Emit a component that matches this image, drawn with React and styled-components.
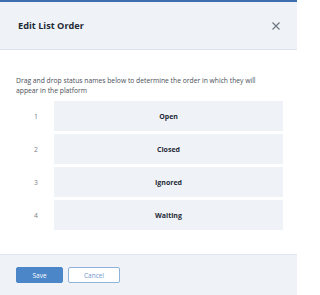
import styled, { createGlobalStyle } from "styled-components";

const GlobalStyle = createGlobalStyle`
  html, body {
    margin: 0;
    padding: 0;
    background: #ffffff;
    overflow: hidden;
  }
  body {
    font-family: "Open Sans", "Noto Sans", sans-serif;
  }
`;

const statuses = ["Open", "Closed", "Ignored", "Waiting"];

const Modal = styled.div`
  width: 297px;
  height: 295px;
  display: flex;
  flex-direction: column;
  background: #ffffff;
  border-top: 2px solid #3d6fae;
  box-sizing: border-box;
`;

const Header = styled.div`
  height: 47px;
  flex-shrink: 0;
  display: flex;
  align-items: center;
  justify-content: space-between;
  padding: 0 15px 0 18px;
  background: #eff3f8;
  border-bottom: 1px solid #dde3ee;
`;

const Title = styled.h2`
  margin: 0;
  font-size: 9.2px;
  font-weight: 700;
  color: #1f2a37;
`;

const CloseButton = styled.button`
  border: none;
  background: none;
  padding: 0;
  width: 12px;
  height: 12px;
  display: flex;
  align-items: center;
  justify-content: center;
  color: #6f7680;
  cursor: pointer;
`;

const Body = styled.div`
  flex: 1;
  padding: 26px 14px 0 16px;
  display: flex;
  flex-direction: column;
`;

const Description = styled.p`
  margin: 0 0 5px 0;
  max-width: 248px;
  font-size: 6.75px;
  line-height: 10px;
  color: #4a4f57;
`;

const List = styled.div`
  display: flex;
  flex-direction: column;
  gap: 3px;
`;

const Row = styled.div`
  display: flex;
  align-items: center;
`;

const Index = styled.span`
  width: 38px;
  font-size: 6.8px;
  color: #7b818a;
  padding-left: 18px;
  box-sizing: border-box;
`;

const Item = styled.div`
  flex: 1;
  height: 30px;
  display: flex;
  align-items: center;
  justify-content: center;
  background: #eff3f8;
  font-size: 7px;
  font-weight: 700;
  color: #1f2a37;
  cursor: grab;
`;

const Footer = styled.div`
  height: 40px;
  flex-shrink: 0;
  display: flex;
  align-items: center;
  gap: 5px;
  padding: 0 16px;
  background: #eff3f8;
  border-top: 1px solid #e1e6ee;
`;

const Button = styled.button`
  height: 16px;
  width: ${(p) => (p.$primary ? "47px" : "52px")};
  font-family: inherit;
  font-size: 6.5px;
  border-radius: 2px;
  border: 1px solid ${(p) => (p.$primary ? "#4a86c8" : "#8fb2dc")};
  background: ${(p) => (p.$primary ? "#4a86c8" : "#ffffff")};
  color: ${(p) => (p.$primary ? "#ffffff" : "#6f98cc")};
  padding: 0;
  cursor: pointer;
`;

export default function App() {
  return (
    <>
      <GlobalStyle />
      <Modal>
        <Header>
          <Title>Edit List Order</Title>
          <CloseButton aria-label="Close">
            <svg width="8" height="8" viewBox="0 0 8 8">
              <path d="M0.5 0.5 L7.5 7.5 M7.5 0.5 L0.5 7.5" stroke="currentColor" strokeWidth="1.2" />
            </svg>
          </CloseButton>
        </Header>
        <Body>
          <Description>
            Drag and drop status names below to determine the order in which they will appear in the platform
          </Description>
          <List>
            {statuses.map((s, i) => (
              <Row key={s}>
                <Index>{i + 1}</Index>
                <Item>{s}</Item>
              </Row>
            ))}
          </List>
        </Body>
        <Footer>
          <Button $primary>Save</Button>
          <Button>Cancel</Button>
        </Footer>
      </Modal>
    </>
  );
}
